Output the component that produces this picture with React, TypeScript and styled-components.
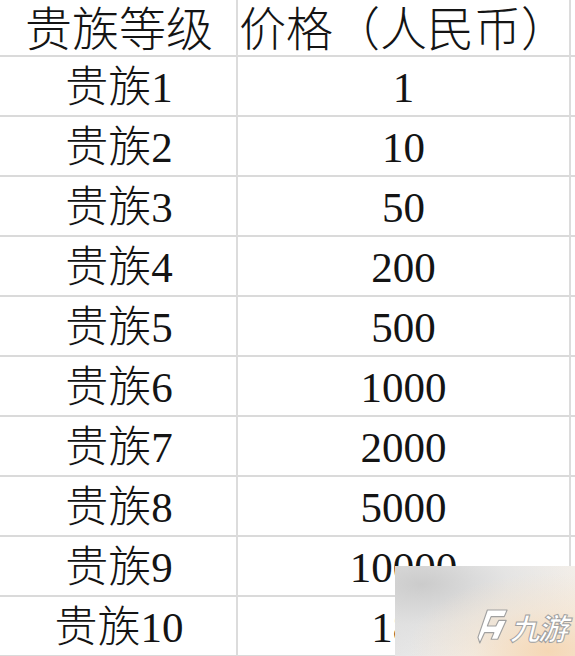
import * as React from 'react';
import styled, { createGlobalStyle } from 'styled-components';

type Tier = {
    name: string;
    price: string;
}

const tiers: Tier[] = [
    { name: '贵族1', price: '1' },
    { name: '贵族2', price: '10' },
    { name: '贵族3', price: '50' },
    { name: '贵族4', price: '200' },
    { name: '贵族5', price: '500' },
    { name: '贵族6', price: '1000' },
    { name: '贵族7', price: '2000' },
    { name: '贵族8', price: '5000' },
    { name: '贵族9', price: '10000' },
    { name: '贵族10', price: '188' },
];

const GlobalStyle = createGlobalStyle`
    html, body {
        margin: 0;
        padding: 0;
        background: #ffffff;
    }
    body {
        width: 575px;
        height: 656px;
        overflow: hidden;
    }
`;

const Sheet = styled.div`
    position: relative;
    width: 575px;
    height: 656px;
    overflow: hidden;
    background: #fff;
    font-family: "Liberation Serif", "Noto Sans CJK SC", serif;
    color: #141414;
`;

const Grid = styled.div`
    display: grid;
    grid-template-columns: 236px 333px 6px;
    grid-auto-rows: 60px;
    grid-template-rows: 57px;
    margin-left: 2px;
`;

const Cell = styled.div<{ $head?: boolean; $last?: boolean }>`
    display: flex;
    align-items: center;
    justify-content: center;
    white-space: nowrap;
    overflow: visible;
    font-size: ${(p) => (p.$head ? '47px' : '43px')};
    font-weight: 300;
    line-height: 1;
    padding-top: ${(p) => (p.$head ? '6px' : '3px')};
    border-bottom: 2px solid #dadada;
    border-right: ${(p) => (p.$last ? 'none' : '2px solid #dcdcdc')};
    box-sizing: border-box;
`;

const NameCell = styled(Cell)`
    margin-left: -2px;
    padding-left: 2px;
`;

const Watermark = styled.div`
    position: absolute;
    left: 395px;
    top: 566px;
    width: 180px;
    height: 90px;
    background:
        radial-gradient(ellipse at 85% 95%, rgba(245, 214, 178, 0.95) 0%, rgba(245, 225, 200, 0.5) 35%, rgba(255, 255, 255, 0) 65%),
        radial-gradient(ellipse at 15% 20%, rgba(200, 200, 200, 0.9) 0%, rgba(220, 220, 220, 0.6) 40%, rgba(240, 240, 240, 0) 75%),
        linear-gradient(90deg, #e6e6e6 0%, #f1f1f1 45%, #f4efe9 100%);
`;

const Logo = styled.div`
    position: absolute;
    right: 6px;
    bottom: 10px;
    display: flex;
    align-items: center;
    gap: 4px;
`;

const LogoText = styled.span`
    font-family: "Noto Sans CJK SC", sans-serif;
    font-size: 30px;
    font-weight: 700;
    color: #ffffff;
    -webkit-text-stroke: 1px #a0a0a0;
    transform: skewX(-14deg);
    letter-spacing: -2px;
    line-height: 1;
`;

const App = () => {
    return (
        <Sheet>
            <GlobalStyle />
            <Grid>
                <NameCell $head>贵族等级</NameCell>
                <Cell $head>价格（人民币）</Cell>
                <Cell $head $last />
                {tiers.map((tier) => (
                    <React.Fragment key={tier.name}>
                        <NameCell>{tier.name}</NameCell>
                        <Cell>{tier.price}</Cell>
                        <Cell $last />
                    </React.Fragment>
                ))}
            </Grid>
            <Watermark>
                <Logo>
                    <svg width="32" height="38" viewBox="0 0 34 40">
                        <path
                            d="M11 2 L32 2 L29 9 L15 9 L11 19 L20 19 L23 13 L31 13 L22 33 L15 33 L18 26 L8 26 L3 37 L1 31 Z"
                            fill="#ffffff"
                            stroke="#a0a0a0"
                            strokeWidth="1.2"
                            strokeLinejoin="round"
                        />
                    </svg>
                    <LogoText>九游</LogoText>
                </Logo>
            </Watermark>
        </Sheet>
    );
}

export default App;
